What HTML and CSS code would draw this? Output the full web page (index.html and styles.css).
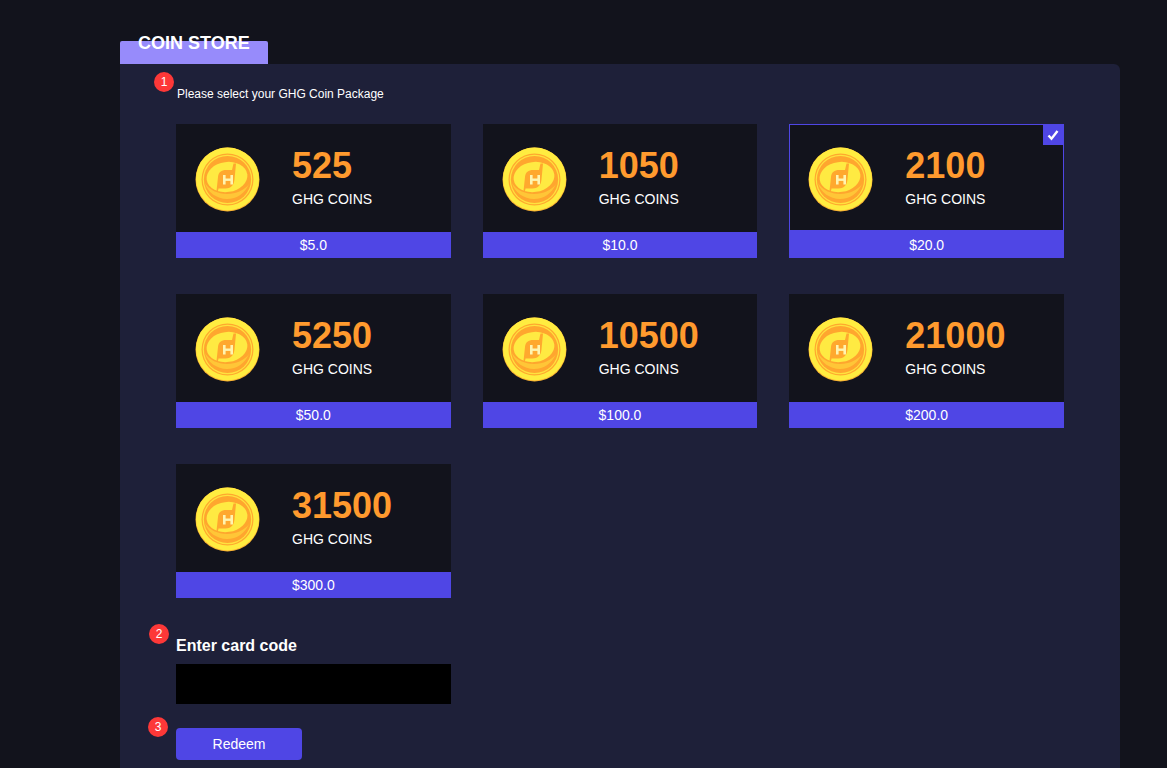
FILE: index.html
```html
<!DOCTYPE html>
<html lang="en">
<head>
    <meta charset="UTF-8">
    <meta name="viewport" content="width=device-width, initial-scale=1.0">
    <title>Coin Store</title>
    <link rel="stylesheet" href="styles.css">
</head>
<body>

    <svg class="defs" width="0" height="0" aria-hidden="true">
        <symbol id="coin" viewBox="0 0 65 65">
            <circle cx="32.5" cy="32.5" r="32" fill="#f9b233"/>
            <circle cx="32.5" cy="32" r="31.5" fill="#ffec40"/>
            <circle cx="32.5" cy="32.5" r="26" fill="#ffa82e"/>
            <circle cx="32.5" cy="32.5" r="24.8" fill="#ffe23e"/>
            <circle cx="32.5" cy="32.5" r="23.600" fill="#ffa62e"/>
            <path d="M10 36c2 9 12 16 22 16 10 0 18-6 22-15-4 6-13 10-22 10-9 0-18-4-22-11z" fill="#ffc637"/>
            <ellipse cx="32" cy="30" rx="20.500" ry="15" transform="rotate(-8 32 30)" fill="#ffea42"/>
            <path d="M21.500 44l1.500-14c.5-5 3.500-7 8-7h6l1.500-6.500h2.500l-1.500 16c-.5 6-4 9-9 9h-7l-.5 2.500z" fill="#ffa82e"/>
            <rect x="28" y="28" width="2.600" height="9.500" fill="#fff4b0"/>
            <rect x="35.400" y="28" width="2.600" height="9.500" fill="#fff4b0"/>
            <rect x="28" y="31.500" width="10" height="2.400" fill="#fff4b0"/>
        </symbol>
    </svg>

    <div class="store">
        <div class="store-tab"><h1>COIN STORE</h1></div>

        <div class="store-panel">
            <section class="step step-package">
                <span class="step-num step-num-1">1</span>
                <p class="step-label">Please select your GHG Coin Package</p>

                <div class="packages">
                    <div class="card">
                        <div class="card-body">
                            <svg class="coin"><use href="#coin"/></svg>
                            <div class="card-info">
                                <div class="amount">525</div>
                                <div class="unit">GHG COINS</div>
                            </div>
                        </div>
                        <div class="price">$5.0</div>
                    </div>
                    <div class="card">
                        <div class="card-body">
                            <svg class="coin"><use href="#coin"/></svg>
                            <div class="card-info">
                                <div class="amount">1050</div>
                                <div class="unit">GHG COINS</div>
                            </div>
                        </div>
                        <div class="price">$10.0</div>
                    </div>
                    <div class="card selected">
                        <div class="card-body">
                            <svg class="coin"><use href="#coin"/></svg>
                            <div class="card-info">
                                <div class="amount">2100</div>
                                <div class="unit">GHG COINS</div>
                            </div>
                            <span class="check">
                                <svg viewBox="0 0 20 20" width="20" height="20"><path d="M5.500 10.500l3 3.200 6-7.700" fill="none" stroke="#fff" stroke-width="2.400"/></svg>
                            </span>
                        </div>
                        <div class="price">$20.0</div>
                    </div>
                    <div class="card">
                        <div class="card-body">
                            <svg class="coin"><use href="#coin"/></svg>
                            <div class="card-info">
                                <div class="amount">5250</div>
                                <div class="unit">GHG COINS</div>
                            </div>
                        </div>
                        <div class="price">$50.0</div>
                    </div>
                    <div class="card">
                        <div class="card-body">
                            <svg class="coin"><use href="#coin"/></svg>
                            <div class="card-info">
                                <div class="amount">10500</div>
                                <div class="unit">GHG COINS</div>
                            </div>
                        </div>
                        <div class="price">$100.0</div>
                    </div>
                    <div class="card">
                        <div class="card-body">
                            <svg class="coin"><use href="#coin"/></svg>
                            <div class="card-info">
                                <div class="amount">21000</div>
                                <div class="unit">GHG COINS</div>
                            </div>
                        </div>
                        <div class="price">$200.0</div>
                    </div>
                    <div class="card">
                        <div class="card-body">
                            <svg class="coin"><use href="#coin"/></svg>
                            <div class="card-info">
                                <div class="amount">31500</div>
                                <div class="unit">GHG COINS</div>
                            </div>
                        </div>
                        <div class="price">$300.0</div>
                    </div>
                </div>
            </section>

            <section class="step step-code">
                <span class="step-num step-num-2">2</span>
                <label class="code-label" for="code">Enter card code</label>
                <input class="code-input" id="code" type="text">
            </section>

            <section class="step step-redeem">
                <span class="step-num step-num-3">3</span>
                <button class="redeem">Redeem</button>
            </section>
        </div>
    </div>

</body>
</html>
```

FILE: styles.css
```css
html, body {
    height: 768px;
    overflow: hidden;
}
body {
    margin: 0;
    background: #12131c;
    color: #fff;
    font-family: "Liberation Sans", Arial, sans-serif;
}
.defs {
    position: absolute;
}
.store {
    width: 1000px;
    margin-left: 120px;
    padding-top: 41px;
}
.store-tab {
    width: 148px;
    height: 23px;
    background: #978bfb;
    border-radius: 2px 2px 0 0;
}
.store-tab h1 {
    margin: 0;
    padding: 0 0 0 18px;
    position: relative;
    top: -8px;
    font-size: 18px;
    line-height: 20px;
    font-weight: bold;
}
.store-panel {
    background: #1e2039;
    border-radius: 0 6px 0 0;
    padding: 0 56px 40px;
}
.step {
    position: relative;
}
.step-package {
    padding-top: 23px;
}
.step-num {
    position: absolute;
    width: 20px;
    height: 20px;
    border-radius: 50%;
    background: #fd3838;
    font-size: 12px;
    line-height: 20px;
    text-align: center;
}
.step-num-1 {
    left: -22px;
    top: 8px;
}
.step-num-2 {
    left: -27px;
    top: 26px;
}
.step-num-3 {
    left: -28px;
    top: 13px;
}
.step-label {
    margin: 0 0 23px;
    padding-left: 1px;
    font-size: 12px;
    line-height: 14px;
}
.packages {
    display: grid;
    grid-template-columns: repeat(3, 1fr);
    column-gap: 32px;
    row-gap: 36px;
}
.card {
    display: flex;
    flex-direction: column;
    height: 134px;
    background: #12131c;
}
.card-body {
    position: relative;
    display: flex;
    height: 108px;
    box-sizing: border-box;
    padding: 23px 0 0 19px;
}
.selected .card-body {
    height: 107px;
    box-shadow: inset 0 0 0 1px #4f46e5;
}
.coin {
    width: 65px;
    height: 65px;
    flex: none;
}
.card-info {
    margin-left: 32px;
}
.amount {
    color: #ff9a2e;
    font-size: 36px;
    font-weight: bold;
    line-height: 40px;
    margin-top: -1px;
}
.unit {
    margin-top: 5px;
    font-size: 14px;
    line-height: 16px;
}
.check {
    position: absolute;
    top: 1px;
    right: 1px;
    width: 20px;
    height: 20px;
    background: #4f46e5;
}
.check svg {
    display: block;
}
.price {
    flex: 1;
    display: flex;
    align-items: center;
    justify-content: center;
    background: #4f46e5;
    font-size: 14px;
}
.step-code {
    padding-top: 39px;
}
.code-label {
    display: block;
    font-size: 16px;
    font-weight: bold;
    line-height: 18px;
    margin-bottom: 9px;
}
.code-input {
    display: block;
    width: 275px;
    height: 40px;
    box-sizing: border-box;
    border: 0;
    background: #000;
    color: #fff;
}
.step-redeem {
    padding-top: 24px;
}
.redeem {
    display: block;
    width: 126px;
    height: 32px;
    border: 0;
    border-radius: 4px;
    background: #4f46e5;
    color: #fff;
    font-family: inherit;
    font-size: 14px;
}
```
